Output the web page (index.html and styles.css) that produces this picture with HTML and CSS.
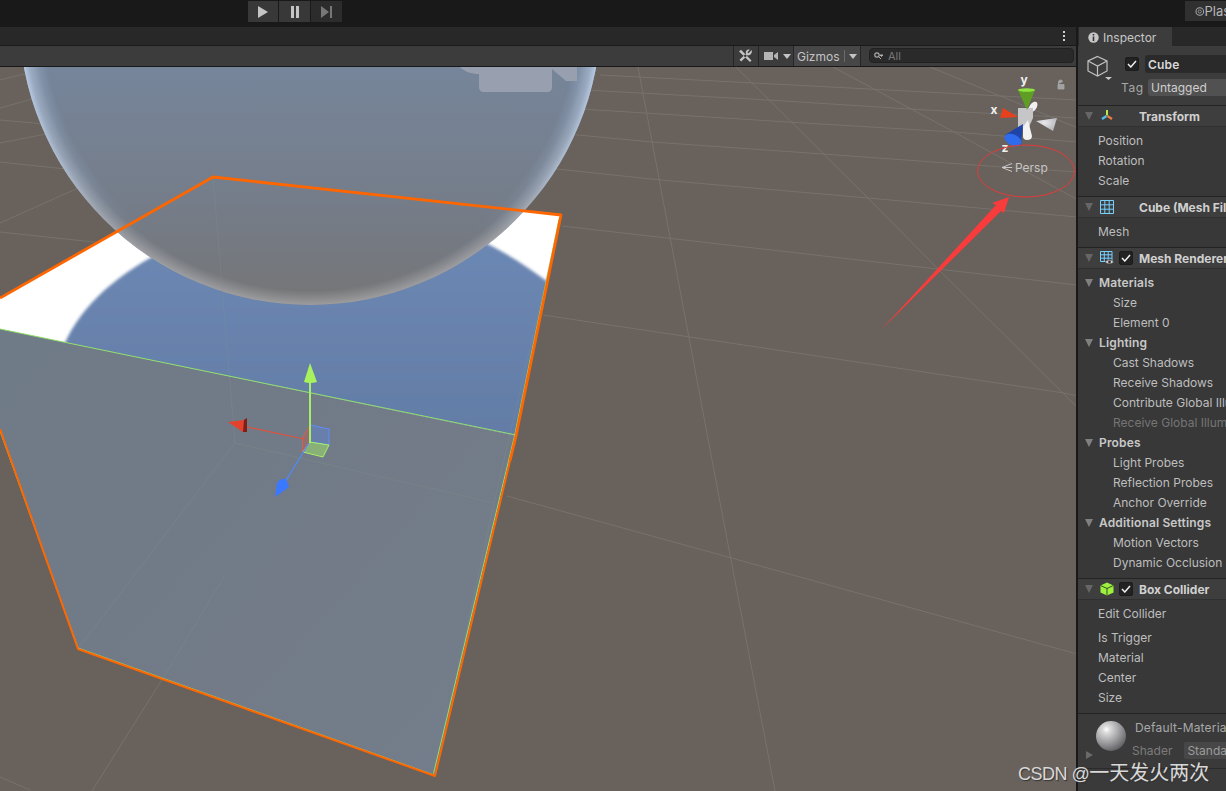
FILE: index.html
```html
<!DOCTYPE html>
<html lang="en">
<head>
<meta charset="utf-8">
<title>Unity Scene</title>
<link rel="stylesheet" href="styles.css">
</head>
<body>
<div class="app">
  <header class="topbar">
    <div class="play-group">
      <button class="pbtn"><svg width="12" height="14" viewBox="0 0 12 14"><path d="M1 1v12l10-6z" fill="#c4c4c4"/></svg></button>
      <button class="pbtn"><svg width="12" height="14" viewBox="0 0 12 14"><path d="M2 1h3v12H2zM7 1h3v12H7z" fill="#c4c4c4"/></svg></button>
      <button class="pbtn pbtn-dim"><svg width="12" height="14" viewBox="0 0 12 14"><path d="M0 1v12l8-6zM9 1h2v12H9z" fill="#777"/></svg></button>
    </div>
    <div class="plastic"><svg width="11" height="11" viewBox="0 0 12 12"><circle cx="6" cy="6" r="4.800" fill="none" stroke="#a8a8a8" stroke-width="1.300"/><circle cx="6" cy="6" r="2" fill="none" stroke="#a8a8a8"/></svg><span>Plastic</span></div>
  </header>
  <div class="workspace">
    <section class="scene-col">
      <div class="tabstrip"><svg width="4" height="12" viewBox="0 0 4 12"><path d="M1 1h2v2H1zM1 5h2v2H1zM1 9h2v2H1z" fill="#d0d0d0"/></svg></div>
      <div class="toolbar">
        <div class="tool tool-wrench"><svg width="15" height="14" viewBox="0 0 15 14"><path d="M1 2.500 3 .8 13.500 11.500 12 13zM13.800 1 10.500 4.300 9.400 3.300 11.800.8C10 .1 8 1 7.800 3L8 4.500 1.500 10.800 3.200 12.600 9.600 6.200C12 6.600 14.500 4.500 13.800 1z" fill="#c4c4c4"/></svg></div>
        <div class="tool tool-cam"><svg width="14" height="10" viewBox="0 0 14 10"><path d="M0 1h9v8H0zM10 4l4-3v8l-4-3z" fill="#b4b4b4"/></svg><i class="arrow"></i></div>
        <div class="tool tool-gizmos"><span>Gizmos</span><b class="sep"></b><i class="arrow"></i></div>
        <div class="search"><svg width="10" height="8" viewBox="0 0 10 8"><circle cx="3" cy="3" r="2.200" fill="none" stroke="#b0b0b0" stroke-width="1.200"/><path d="M5 5l2 2M6 3h3l-1.500 1.500z" fill="#b0b0b0" stroke="#b0b0b0"/></svg><span>All</span></div>
      </div>
      <div class="scene">
        <svg class="scene-svg" viewBox="0 67 1078 724" width="1078" height="724">
          <defs>
            <linearGradient id="sphereBase" gradientUnits="userSpaceOnUse" x1="0" y1="67" x2="0" y2="305">
              <stop offset="0" stop-color="#76859a"/><stop offset=".55" stop-color="#757d8a"/><stop offset="1" stop-color="#757576"/>
            </linearGradient>
            <radialGradient id="sphereRim" gradientUnits="userSpaceOnUse" cx="310" cy="14" r="291">
              <stop offset=".92" stop-color="#a9c2e2" stop-opacity="0"/><stop offset=".98" stop-color="#a9c2e2" stop-opacity=".5"/><stop offset="1" stop-color="#bcd2ee" stop-opacity=".85"/>
            </radialGradient>
            <radialGradient id="sphereRimGrey" gradientUnits="userSpaceOnUse" cx="310" cy="14" r="291">
              <stop offset=".95" stop-color="#b0b0b4" stop-opacity="0"/><stop offset="1" stop-color="#b8b8ba" stop-opacity=".6"/>
            </radialGradient>
            <linearGradient id="rimFade" gradientUnits="userSpaceOnUse" x1="0" y1="67" x2="0" y2="305">
              <stop offset="0" stop-color="#fff"/><stop offset=".45" stop-color="#999"/><stop offset=".7" stop-color="#000"/><stop offset="1" stop-color="#000"/>
            </linearGradient>
            <mask id="rimMask" maskUnits="userSpaceOnUse" x="0" y="0" width="700" height="320"><rect x="0" y="0" width="700" height="320" fill="url(#rimFade)"/></mask>
            <linearGradient id="blueShade" gradientUnits="userSpaceOnUse" x1="0" y1="240" x2="0" y2="440">
              <stop offset="0" stop-color="#6c87b3"/><stop offset="1" stop-color="#627ca5"/>
            </linearGradient>
            <linearGradient id="faceShade" gradientUnits="userSpaceOnUse" x1="0" y1="330" x2="500" y2="770">
              <stop offset="0" stop-color="#6f7b87"/><stop offset=".6" stop-color="#727b87"/><stop offset="1" stop-color="#747d8b"/>
            </linearGradient>
            <radialGradient id="cubeShade" cx=".4" cy=".35" r=".7">
              <stop offset="0" stop-color="#e8e8ec"/><stop offset="1" stop-color="#b4b4b8"/>
            </radialGradient>
            <clipPath id="topFace"><path d="M213 177 561 215 516 436 0 329V298z"/></clipPath>
            <filter id="soft" x="-5%" y="-5%" width="110%" height="110%"><feGaussianBlur stdDeviation="1.600"/></filter>
          </defs>

          <g class="grid">
            <path d="M562 226 1077 285M543 315 1064 393 1078 396M547 168 661 180 868 198 1077 217M567 134 652 142 823 154 1002 167 1078 172M581 109 788 122 954 132 1077 142M585 90 768 100 926 110 1077 118M600 75 850 88 1077 100M507 496 728 557 1077 654"/>
            <path d="M0 80 28 73M0 108 36 98M0 120 45 124M0 143 51 133M0 162 75 170M0 223 85 185M0 232 122 245M0 777 30 790"/>
            <path d="M638 67 712 460 775 791M736 67 868 198 937 268 1077 407M833 67 954 132 1078 200M930 67 1078 128M163 678 92 791"/>
          </g>

          <g clip-path="url(#topFace)">
            <rect x="0" y="170" width="570" height="270" fill="#fff"/>
            <path d="M64 345C82 303 122 270 172 247L470 236C500 248 530 268 556 288L520 445H64z" fill="url(#blueShade)" filter="url(#soft)"/>
          </g>

          <circle cx="310" cy="14" r="291" fill="url(#sphereBase)"/>
          <circle cx="310" cy="14" r="291" fill="url(#sphereRimGrey)"/>
          <circle cx="310" cy="14" r="291" fill="url(#sphereRim)" mask="url(#rimMask)"/>
          <path class="cam-ghost" d="M460 67C465 72 472 74 479 74V87Q479 92 484 92H547Q552 92 552 87V69L566 81H577V67z"/>

          <path d="M0 329 516 436 435 776 78 649 0 429z" fill="url(#faceShade)"/>
          <path class="ghost" d="M213 177 235 443 78 649M235 443 494 503 435 776M494 503 561 215M225 575 163 678"/>
          <path class="green" d="M0 329 516 435"/>
          <path class="green" d="M559 219 514.500 436 433.500 773.500"/>
          <path class="green" d="M0 431 78 648 434 775"/>
          <path class="orange-thick" d="M0 298 213 177 561 215 516 436 510 461"/>
          <path class="orange-thin" d="M510 461 435 776 78 649 0 429"/>

          <path d="M310 425 329 429V445L310 442z" fill="#5a86ee" fill-opacity=".35" stroke="#5f8cff"/>
          <path d="M310 425 303 437 302 452 310 442z" fill="#e0503c" fill-opacity=".3" stroke="#d8604e"/>
          <path d="M310 442 329 445 323 457 303 452z" fill="#a4f263" fill-opacity=".45" stroke="#a6f068"/>
          <path d="M247 427 304 439" stroke="#e2513c" stroke-width="1.200"/>
          <path d="M285 482 309 443" stroke="#4f8bff" stroke-width="1.200"/>
          <path d="M310 381V443" stroke="#a6ee66" stroke-width="2"/>
          <path d="M310 363 317 382Q310 384 304 382z" fill="#a8f25e"/>
          <path d="M228 422 244 420 247 418 247 432 243 432z" fill="#e4422c"/>
          <path d="M244 420 247 418V432L243 432z" fill="#7c2018"/>
          <path d="M275 497 277 483Q281 478 286 479L289 487z" fill="#3a78ff"/>

          <ellipse cx="1033" cy="107" rx="3.500" ry="6" transform="rotate(35 1033 107)" fill="#f0f0f0"/>
          <path d="M1018 108 1033 108 1033 118 1029 127H1018z" fill="#c6c6c8"/>
          <path d="M1023 127 1028 120 1032 136Q1032 140 1027 140 1023 140 1023 136z" fill="#f2f2f2"/>
          <path d="M1036 121 1057 118 1053 131z" fill="url(#cubeShade)"/>
          <path d="M1027 110 1018 90H1035z" fill="#5e9e24"/>
          <ellipse cx="1026.500" cy="90" rx="8.500" ry="1.800" fill="#8fe33e"/>
          <path d="M1018 117 1000 118 1003 108z" fill="#e8401c"/>
          <path d="M1023 124 1005 135 1021 145z" fill="#1f44a8"/>
          <ellipse cx="1013" cy="140" rx="9" ry="5.500" transform="rotate(25 1013 140)" fill="#2f6bee"/>
          <path class="lock" d="M1058 84.500H1064V89H1058zM1058.500 84V82Q1058.500 80 1060.500 80Q1062.500 80 1062.500 82"/>
          <text class="axis" x="1024" y="84" text-anchor="middle">y</text>
          <text class="axis" x="994" y="114" text-anchor="middle">x</text>
          <text class="axis" x="1005" y="152" text-anchor="middle">z</text>
          <path class="persp-icon" d="M1012 163.500 1002 167.500 1012 167.500M1002 167.500 1012 171.500"/>
          <text class="persp" x="1015" y="172">Persp</text>

          <ellipse cx="1026" cy="171" rx="48.500" ry="26" class="red-ring"/>
          <path d="M881 330 996 205 992 203 1009 197 1004 213 1001 211z" fill="#f83c3c"/>
        </svg>
      </div>
    </section>

    <aside class="inspector">
      <div class="ins-tabs"><div class="ins-tab"><svg width="11" height="11" viewBox="0 0 11 11"><circle cx="5.500" cy="5.500" r="5.200" fill="#c6c6c6"/><path d="M4.700 2h1.600v1.500H4.700zM4.700 4.500h1.600V9H4.700z" fill="#333"/></svg><span>Inspector</span></div></div>
      <div class="ins-head">
        <div class="obj-icon"><svg width="27" height="26" viewBox="0 0 27 26"><path d="M10.500 1.500 20 6V16L10.500 21 1 16V6zM1 6l9.500 5L20 6M10.500 11V21" fill="none" stroke="#c2c2c2" stroke-width="1.200"/><path d="M18 22h7l-3.500 3z" fill="#c8c8c8"/></svg></div>
        <div class="head-rows">
          <div class="name-row"><span class="check"><svg width="10" height="8" viewBox="0 0 10 8"><path d="M1 4 3.800 7 9 1" fill="none" stroke="#eee" stroke-width="1.500"/></svg></span><div class="name-field">Cube</div></div>
          <div class="tag-row"><span class="tag-label">Tag</span><div class="tag-drop">Untagged</div></div>
        </div>
      </div>

      <section class="comp">
        <div class="comp-head"><i class="fold fold-dim"></i><svg class="comp-icon" width="14" height="14" viewBox="0 0 14 14"><path d="M7 6.500V1" stroke="#b8e84c" stroke-width="2"/><path d="M6.500 7 2 10" stroke="#52bdf0" stroke-width="2.200"/><path d="M7.500 7 12 10" stroke="#ef7a3c" stroke-width="2.200"/></svg><span class="no-check"></span><h2>Transform</h2></div>
        <div class="comp-body">
          <div class="row">Position</div><div class="row">Rotation</div><div class="row">Scale</div>
        </div>
      </section>

      <section class="comp">
        <div class="comp-head"><i class="fold fold-dim"></i><svg class="comp-icon" width="14" height="14" viewBox="0 0 14 14"><path d="M.5.500h13v13H.500zM4.800.500v13M9.200.500v13M.500 4.800h13M.500 9.200h13" fill="none" stroke="#78d0ff"/></svg><span class="no-check"></span><h2>Cube (Mesh Filter)</h2></div>
        <div class="comp-body"><div class="row">Mesh</div></div>
      </section>

      <section class="comp">
        <div class="comp-head"><i class="fold fold-dim"></i><svg class="comp-icon" width="14" height="14" viewBox="0 0 14 14"><path d="M.5.500h11.500v10H.500zM4.300.500v10M8.200.500v10M.500 3.800h11.500M.500 7.200h11.500" fill="none" stroke="#78d0ff"/><path d="M5 11Q9 6.500 14 11Q9 15 5 11z" fill="#d8d8d8" stroke="#383838" stroke-width=".6"/><circle cx="9.500" cy="11" r="1.400" fill="#333"/></svg><span class="check"><svg width="10" height="8" viewBox="0 0 10 8"><path d="M1 4 3.800 7 9 1" fill="none" stroke="#eee" stroke-width="1.500"/></svg></span><h2>Mesh Renderer</h2></div>
        <div class="comp-body">
          <div class="row row-group"><i class="fold"></i>Materials</div>
          <div class="row row-sub">Size</div>
          <div class="row row-sub">Element 0</div>
          <div class="row row-group"><i class="fold"></i>Lighting</div>
          <div class="row row-sub">Cast Shadows</div>
          <div class="row row-sub">Receive Shadows</div>
          <div class="row row-sub">Contribute Global Illumination</div>
          <div class="row row-sub row-off">Receive Global Illumination</div>
          <div class="row row-group"><i class="fold"></i>Probes</div>
          <div class="row row-sub">Light Probes</div>
          <div class="row row-sub">Reflection Probes</div>
          <div class="row row-sub">Anchor Override</div>
          <div class="row row-group"><i class="fold"></i>Additional Settings</div>
          <div class="row row-sub">Motion Vectors</div>
          <div class="row row-sub">Dynamic Occlusion</div>
        </div>
      </section>

      <section class="comp">
        <div class="comp-head"><i class="fold fold-dim"></i><svg class="comp-icon" width="14" height="14" viewBox="0 0 14 14"><path d="M7 .500 13.500 3.500V10.500L7 13.500.500 10.500V3.500z" fill="#9df03e"/><path d="M.800 3.600 7 6.500 13.200 3.600M7 6.500v7" fill="none" stroke="#3a4a28"/></svg><span class="check"><svg width="10" height="8" viewBox="0 0 10 8"><path d="M1 4 3.800 7 9 1" fill="none" stroke="#eee" stroke-width="1.500"/></svg></span><h2>Box Collider</h2></div>
        <div class="comp-body">
          <div class="row row-gap">Edit Collider</div>
          <div class="row">Is Trigger</div><div class="row">Material</div><div class="row">Center</div><div class="row">Size</div>
        </div>
      </section>

      <section class="material">
        <div class="mat-ball"></div>
        <i class="mat-arrow"></i>
        <div class="mat-info">
          <div class="mat-name">Default-Material</div>
          <div class="mat-shader"><span>Shader</span><div class="shader-drop">Standard</div></div>
        </div>
      </section>
    </aside>
  </div>
</div>
<div class="watermark"><span class="wm-latin">CSDN @</span>一天发火两次</div>
</body>
</html>
```

FILE: styles.css
```css
* { box-sizing: border-box; }
html, body { margin: 0; height: 100%; overflow: hidden; }
body { background: #191919; font-family: Inter, "Noto Sans", sans-serif; font-size: 12px; color: #bebebe; }
.app { width: 1226px; height: 791px; display: flex; flex-direction: column; overflow: hidden; }

.topbar { height: 27px; flex: none; background: #191919; display: flex; align-items: flex-start; padding: 1px 0 0 248px; }
.play-group { display: flex; gap: 1px; }
.pbtn { width: 30px; height: 21px; border: 0; padding: 0; background: #383838; display: flex; align-items: center; justify-content: center; }
.pbtn + .pbtn { width: 31px; }
.pbtn-dim { background: #2c2c2c; }
.plastic { margin-left: 843px; width: 60px; height: 20px; flex: none; background: #303030; display: flex; align-items: center; gap: 0; padding-left: 10px; font-size: 13px; color: #b8b8b8; white-space: nowrap; overflow: hidden; }

.workspace { flex: 1; display: flex; min-height: 0; }
.scene-col { width: 1076px; flex: none; display: flex; flex-direction: column; overflow: hidden; }
.tabstrip { height: 19px; flex: none; background: #282828; border-bottom: 1px solid #1a1a1a; display: flex; align-items: center; justify-content: flex-end; padding-right: 10px; }
.toolbar { height: 21px; flex: none; background: #3c3c3c; border-bottom: 1px solid #191919; display: flex; justify-content: flex-end; padding-right: 2px; }
.tool { height: 20px; display: flex; align-items: center; border-left: 1px solid #262626; }
.tool-wrench { width: 25px; padding-left: 4px; }
.tool-cam { width: 35px; padding-left: 5px; gap: 5px; }
.tool-gizmos { width: 68px; padding-left: 3px; background: #474747; border-right: 1px solid #262626; color: #c4c4c4; }
.sep { width: 1px; height: 12px; background: #6a6a6a; margin: 0 4px 0 4px; }
.arrow { width: 0; height: 0; border-left: 4px solid transparent; border-right: 4px solid transparent; border-top: 5px solid #c4c4c4; }
.search { width: 205px; height: 15px; margin: 2px 0 0 8px; background: #2a2a2a; border: 1px solid #212121; border-radius: 4px; display: flex; align-items: center; gap: 4px; padding-left: 4px; color: #777; font-size: 11px; }

.scene { flex: 1; background: #69615b; overflow: hidden; }
.scene-svg { display: block; }
.grid path { fill: none; stroke: #77726d; stroke-width: 1; }
.cam-ghost { fill: #98a0af; }
.ghost { fill: none; stroke: #84938c; stroke-opacity: .3; stroke-width: 1; }
.green { fill: none; stroke: #92e06c; stroke-width: 1; }
.orange-thick { fill: none; stroke: #ff6600; stroke-width: 2.800; stroke-linejoin: round; }
.orange-thin { fill: none; stroke: #ff6600; stroke-width: 2; stroke-linejoin: round; }
.lock { fill: #a8a8a8; stroke: #a8a8a8; stroke-width: .8; fill-rule: nonzero; fill-opacity: .9; }
.axis { font-family: Inter, sans-serif; font-size: 12px; font-weight: 700; fill: #f0f0f0; }
.persp-icon { fill: none; stroke: #c8c8c8; stroke-width: 1; }
.persp { font-family: Inter, sans-serif; font-size: 12px; fill: #c6c6c6; }
.red-ring { fill: none; stroke: #e23b3b; stroke-width: 1; }

.inspector { width: 150px; flex: none; background: #383838; border-left: 2px solid #191919; overflow: hidden; display: flex; flex-direction: column; }
.ins-tabs { height: 19px; flex: none; background: #282828; }
.ins-tab { width: 93px; height: 19px; margin-left: 1px; background: #3c3c3c; display: flex; align-items: center; gap: 4px; padding: 2px 0 0 9px; color: #c8c8c8; white-space: nowrap; }
.ins-head { height: 60px; flex: none; background: #3c3c3c; border-bottom: 1px solid #232323; display: flex; padding: 9px 0 0 9px; }
.obj-icon { width: 34px; flex: none; }
.head-rows { flex: 1; min-width: 0; display: flex; flex-direction: column; gap: 6px; }
.name-row { height: 18px; display: flex; align-items: center; gap: 6px; padding-left: 4px; }
.check { width: 14px; height: 14px; flex: none; background: #222; border: 1px solid #1c1c1c; border-radius: 2px; display: flex; align-items: center; justify-content: center; }
.name-field { flex: 1; height: 18px; margin-right: -8px; background: #2a2a2a; border-radius: 3px; padding: 1px 0 0 3px; line-height: 18px; font-weight: 600; color: #d8d8d8; letter-spacing: .2px; }
.tag-row { height: 17px; display: flex; align-items: center; }
.tag-label { width: 27px; flex: none; color: #a8a8a8; letter-spacing: .6px; }
.tag-drop { flex: 1; height: 17px; margin-right: -8px; background: #515151; border-radius: 3px; padding-left: 3px; line-height: 17px; color: #cfcfcf; white-space: nowrap; }

.comp { flex: none; border-bottom: 1px solid #232323; }
.comp-head { height: 21px; background: #3e3e3e; border-bottom: 1px solid #303030; display: flex; align-items: center; padding-left: 7px; white-space: nowrap; }
.comp-head h2 { margin: 0; font-size: 12px; font-weight: 700; color: #d0d0d0; }
.comp-icon { margin-left: 7px; flex: none; }
.no-check, .comp-head .check { margin-left: 5px; margin-right: 6px; }
.no-check { width: 14px; flex: none; }
.fold { width: 0; height: 0; flex: none; border-left: 4.500px solid transparent; border-right: 4.500px solid transparent; border-top: 8px solid #808080; }
.fold-dim { border-top-color: #666; }
.comp-body { padding: 4px 0 5px; }
.row { height: 20px; line-height: 20px; padding-left: 20px; white-space: nowrap; }
.row-gap { margin-bottom: 4px; }
.row-sub { padding-left: 35px; }
.row-off { color: #757575; }
.row-group { padding-left: 7px; display: flex; align-items: center; gap: 6px; font-weight: 600; color: #c8c8c8; letter-spacing: .15px; }

.material { position: relative; flex: 1; background: #3a3a3a; display: flex; padding: 7px 0 0 18px; white-space: nowrap; }
.material::after { content: ""; position: absolute; left: 0; right: 0; top: 54px; height: 1px; background: #2a2a2a; }
.mat-ball { width: 30px; height: 30px; flex: none; border-radius: 50%; background: radial-gradient(circle at 35% 28%, #fff 0, #dcdcdc 12%, #9a9a9e 48%, #5c5c60 80%, #76767a 100%); }
.mat-arrow { position: absolute; left: 8px; top: 37px; width: 0; height: 0; border-top: 4px solid transparent; border-bottom: 4px solid transparent; border-left: 7px solid #6a6a6a; }
.mat-info { margin: -1px 0 0 6px; display: flex; flex-direction: column; }
.mat-name { margin-left: 3px; height: 16px; line-height: 16px; color: #a8a8a8; letter-spacing: .2px; }
.mat-shader { margin-top: 6px; display: flex; align-items: center; color: #7c7c7c; }
.shader-drop { margin-left: 12px; height: 17px; padding-left: 3px; line-height: 17px; background: #474747; color: #9c9c9c; border-radius: 2px; }

.watermark { position: absolute; left: 1018px; top: 759px; font-family: "Noto Sans CJK SC", sans-serif; font-size: 20px; line-height: 26px; color: #d8d8d8; text-shadow: 1px 1px 1px #333; white-space: nowrap; }
.wm-latin { font-family: "Liberation Sans", sans-serif; font-size: 18px; letter-spacing: -.5px; }
```
